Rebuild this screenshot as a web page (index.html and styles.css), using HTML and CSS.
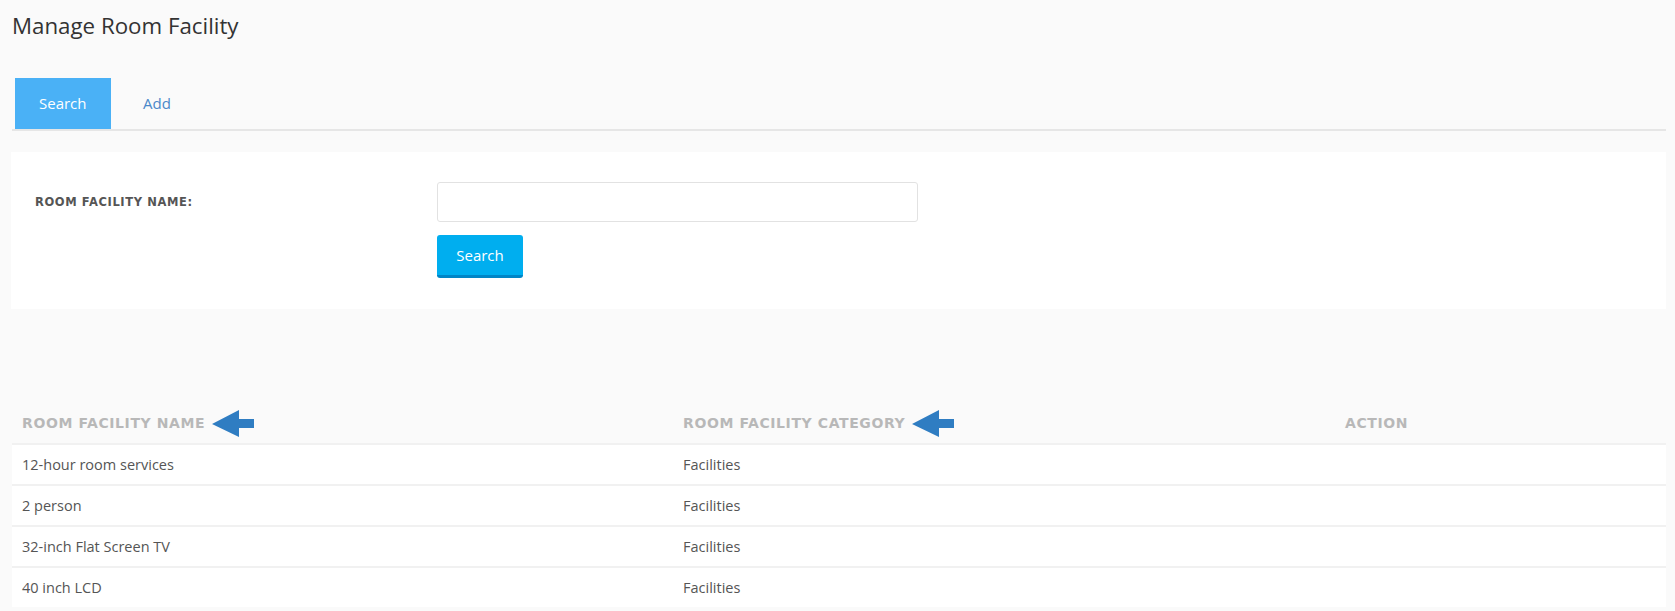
FILE: index.html
```html
<!DOCTYPE html>
<html>
<head>
<meta charset="utf-8">
<title>Manage Room Facility</title>
<link rel="stylesheet" href="styles.css">
</head>
<body>
<div class="page">
  <h1 class="title">Manage Room Facility</h1>
  <div class="tabs">
    <a class="tab active">Search</a>
    <a class="tab">Add</a>
  </div>
  <div class="panel">
    <div class="form-grid">
      <label class="label">ROOM FACILITY NAME:</label>
      <div class="controls">
        <input class="input" type="text">
        <button class="btn">Search</button>
      </div>
    </div>
  </div>
  <table class="grid">
    <colgroup><col class="c1"><col class="c2"><col class="c3"></colgroup>
    <thead>
      <tr>
        <th><span class="th-in">ROOM FACILITY NAME<svg class="arrow" viewBox="0 0 42 27" width="42" height="27"><path d="M0 14 L27 0 L27 9 L42 9 L42 18 L27 18 L27 27 Z" fill="#2f7dc2"/></svg></span></th>
        <th><span class="th-in">ROOM FACILITY CATEGORY<svg class="arrow" viewBox="0 0 42 27" width="42" height="27"><path d="M0 14 L27 0 L27 9 L42 9 L42 18 L27 18 L27 27 Z" fill="#2f7dc2"/></svg></span></th>
        <th>ACTION</th>
      </tr>
    </thead>
    <tbody>
      <tr><td>12-hour room services</td><td>Facilities</td><td></td></tr>
      <tr><td>2 person</td><td>Facilities</td><td></td></tr>
      <tr><td>32-inch Flat Screen TV</td><td>Facilities</td><td></td></tr>
      <tr><td>40 inch LCD</td><td>Facilities</td><td></td></tr>
    </tbody>
  </table>
</div>
</body>
</html>
```
FILE: styles.css
```css
html, body {
  margin: 0;
  padding: 0;
  background: #fafafa;
  font-family: "Open Sans", "Noto Sans", sans-serif;
  color: #555;
}
.page {
  padding: 0 9px 0 11px;
}
.title {
  margin: 0;
  padding: 9px 0 0 1px;
  font-size: 22.3px;
  font-weight: 400;
  line-height: 34px;
  color: #333;
}
.tabs {
  margin: 35px 0 0 1px;
  padding-left: 3px;
  display: flex;
  border-bottom: 2px solid #e6e6e6;
}
.tab {
  display: block;
  height: 51px;
  line-height: 51px;
  padding: 0 24px;
  font-size: 15px;
  color: #4a88c9;
}
.tab.active {
  background: #4ab1f6;
  color: #fff;
  width: 48px;
}
.tab + .tab {
  margin-left: 8px;
}
.panel {
  margin-top: 21px;
  background: #fff;
  padding: 30px 0 31px 24px;
}
.form-grid {
  display: grid;
  grid-template-columns: 402px 481px;
}
.label {
  font-family: "DejaVu Sans", Inter, sans-serif;
  font-size: 11.5px;
  font-weight: 700;
  letter-spacing: 0.6px;
  color: #555;
  line-height: 40px;
}
.controls {
  display: flex;
  flex-direction: column;
  align-items: flex-start;
  gap: 13px;
}
.input {
  box-sizing: border-box;
  width: 481px;
  height: 40px;
  margin: 0;
  border: 1px solid #e2e2e2;
  border-radius: 3px;
  background: #fff;
}
.btn {
  box-sizing: border-box;
  width: 86px;
  height: 43px;
  border: 0;
  border-bottom: 3px solid #0085c6;
  border-radius: 3px;
  background: #00aeef;
  color: #fff;
  font-family: "Open Sans", "Noto Sans", sans-serif;
  font-size: 15px;
  padding: 0;
}
.grid {
  margin: 94px 0 0 1px;
  width: calc(100% - 1px);
  border-collapse: collapse;
  table-layout: fixed;
}
.c1 { width: 661px; }
.c2 { width: 662px; }
.grid th {
  height: 40px;
  padding: 0 10px;
  text-align: left;
  font-family: "DejaVu Sans", Inter, sans-serif;
  font-size: 14px;
  font-weight: 700;
  letter-spacing: 0.6px;
  color: #b8b8b8;
  vertical-align: middle;
}
.th-in {
  display: inline-flex;
  align-items: center;
}
.arrow {
  margin-left: 7px;
  display: block;
}
.grid td {
  height: 39px;
  padding: 0 10px;
  background: #fff;
  border-top: 2px solid #f1f1f1;
  font-size: 14.5px;
  color: #555;
}
```
